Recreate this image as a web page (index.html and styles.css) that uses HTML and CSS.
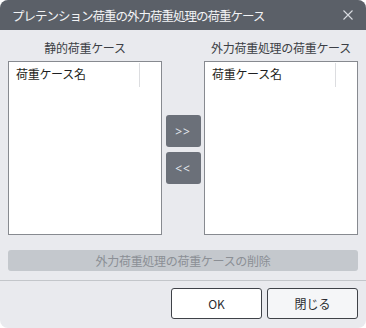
FILE: index.html
```html
<!DOCTYPE html>
<html lang="ja">
<head>
  <meta charset="UTF-8">
  <meta name="viewport" content="width=device-width, initial-scale=1.0">
  <title>プレテンション荷重の外力荷重処理の荷重ケース</title>
  <link rel="stylesheet" href="styles.css">
</head>
<body>
  <div class="dialog">
    <div class="titlebar">
      <span class="title">プレテンション荷重の外力荷重処理の荷重ケース</span>
      <svg class="close" width="10" height="10" viewBox="0 0 10 10">
        <path d="M0.5 0.5 L9.5 9.5 M9.5 0.5 L0.5 9.5" stroke="#d8dbe0" stroke-width="1.1" fill="none"/>
      </svg>
    </div>

    <div class="content">
      <div class="lists">
        <div class="list-label">静的荷重ケース</div>
        <div></div>
        <div class="list-label">外力荷重処理の荷重ケース</div>

        <div class="listbox">
          <div class="list-header">
            <span class="col">荷重ケース名</span>
          </div>
        </div>
        <div class="move-buttons">
          <button class="move">&gt;&gt;</button>
          <button class="move">&lt;&lt;</button>
        </div>
        <div class="listbox">
          <div class="list-header">
            <span class="col">荷重ケース名</span>
          </div>
        </div>
      </div>

      <button class="delete" disabled>外力荷重処理の荷重ケースの削除</button>
    </div>

    <div class="footer">
      <button class="btn btn-ok">OK</button>
      <button class="btn btn-close">閉じる</button>
    </div>
  </div>
</body>
</html>
```

FILE: styles.css
```css
* {
  box-sizing: border-box;
}

body {
  margin: 0;
  background-color: #ffffff;
  font-family: "Noto Sans CJK JP", "Noto Sans", sans-serif;
  font-size: 12px;
  letter-spacing: -0.3px;
}

.dialog {
  width: 366px;
  height: 328px;
  background-color: #e9eaee;
  border-radius: 8px;
  overflow: hidden;
  display: flex;
  flex-direction: column;
}

.titlebar {
  height: 30px;
  background-color: #5b6068;
  display: flex;
  align-items: center;
  justify-content: space-between;
  padding: 0 12px 0 12px;
  color: #f2f3f5;
  font-size: 12.5px;
  letter-spacing: -1px;
}

.close {
  margin-right: 1px;
}

.content {
  padding: 0 8px;
}

.lists {
  display: grid;
  grid-template-columns: 154px 42px 154px;
}

.list-label {
  text-align: center;
  padding-top: 10px;
  line-height: 16px;
  margin-bottom: 5px;
  color: #3c3f45;
}

.listbox {
  height: 174px;
  background-color: #ffffff;
  border: 1px solid #878a90;
}

.list-header {
  display: flex;
  height: 25px;
  padding-top: 1px;
}

.col {
  width: 131px;
  padding-left: 7px;
  line-height: 22px;
  color: #1e1f22;
  border-right: 1px solid #dcdde0;
}

.move-buttons {
  display: flex;
  flex-direction: column;
  align-items: center;
  gap: 5px;
  padding-top: 54px;
}

.move {
  width: 35px;
  height: 32px;
  border: none;
  border-radius: 3px;
  background-color: #6b7079;
  color: #e4e8ee;
  font-family: "Noto Sans", sans-serif;
  font-size: 12px;
  letter-spacing: 1px;
  padding: 0;
}

.delete {
  display: block;
  width: 100%;
  height: 21px;
  margin-top: 15px;
  border: none;
  border-radius: 3px;
  background-color: #c4c8cd;
  color: #8b8f95;
  font-family: inherit;
  font-size: 12px;
  letter-spacing: -0.3px;
  padding: 0;
}

.footer {
  margin-top: 9px;
  border-top: 1px solid #c3c6ca;
  display: flex;
  justify-content: flex-end;
  gap: 5px;
  padding: 7px 8px 0 0;
}

.btn {
  width: 91px;
  height: 31px;
  border: 1px solid #3f4248;
  border-radius: 3px;
  font-family: inherit;
  font-size: 12px;
  color: #2a2c30;
  padding: 0;
}

.btn-ok {
  background-color: #ffffff;
}

.btn-close {
  background-color: #f5f6f8;
}
```
